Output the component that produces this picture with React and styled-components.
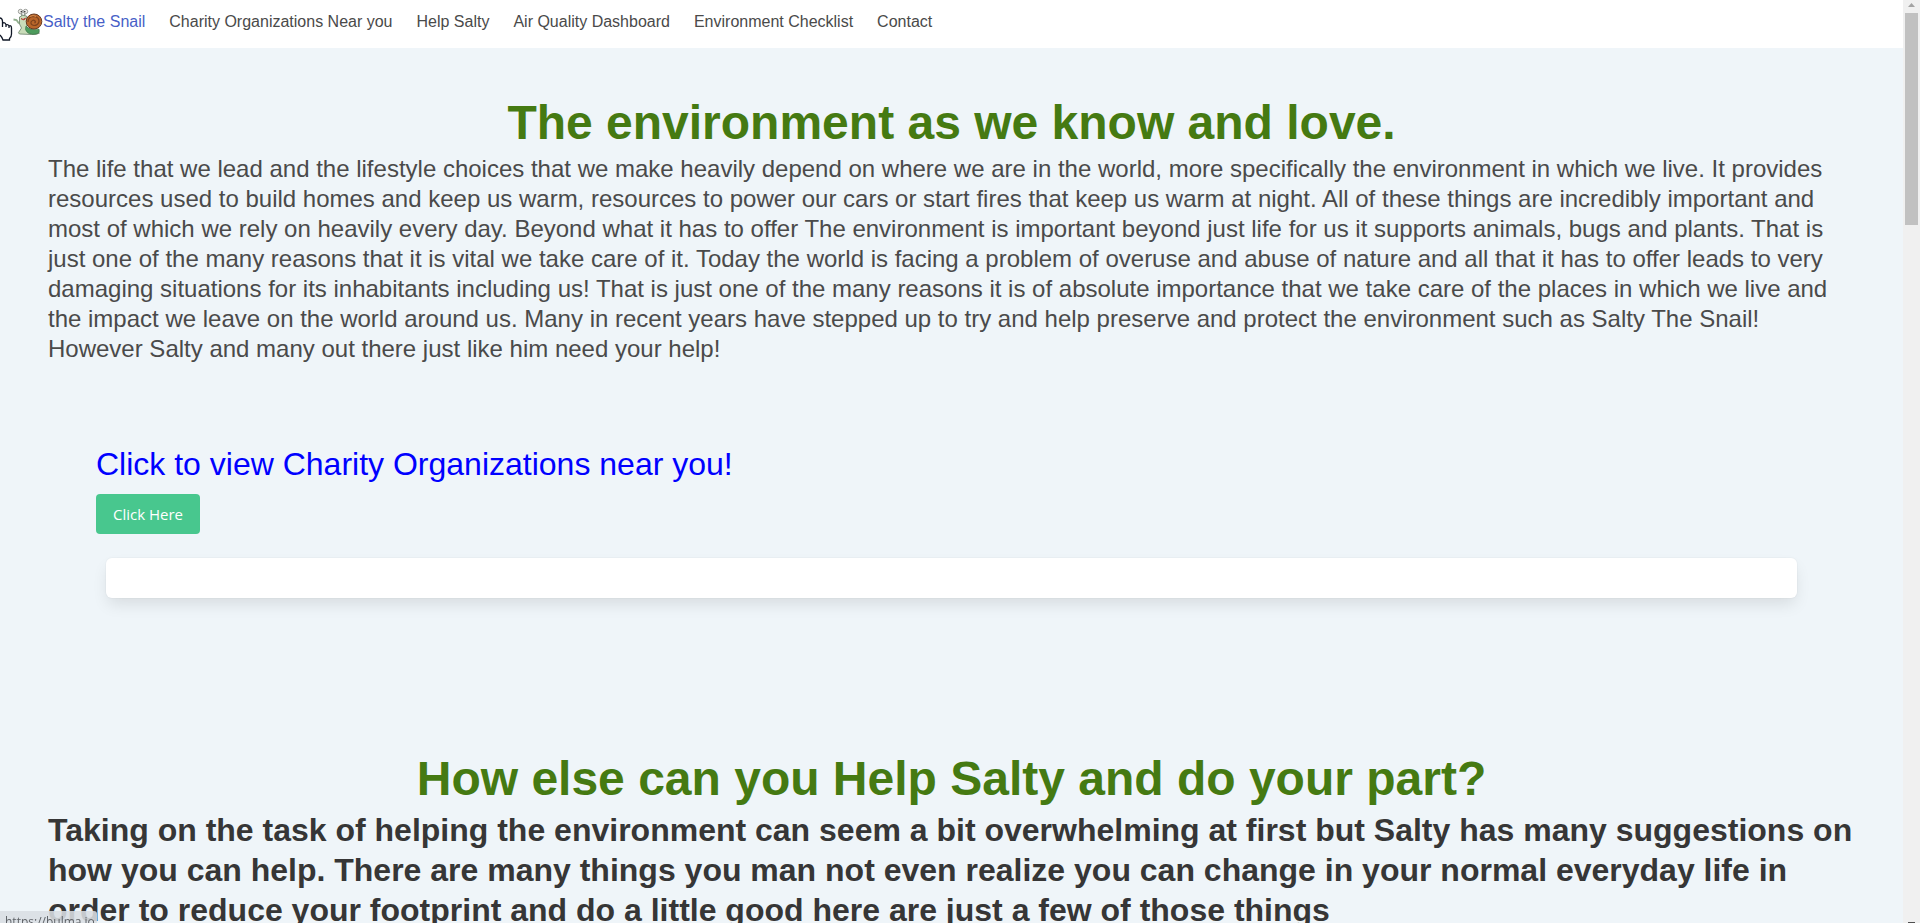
import React from "react";
import styled, { createGlobalStyle } from "styled-components";

const sans = `"Liberation Sans", Arial, Helvetica, sans-serif`;
const ui = `"Open Sans", "Noto Sans", sans-serif`;

const GlobalStyle = createGlobalStyle`
  *, *::before, *::after { box-sizing: border-box; }
  body { margin: 0; background: #eff5f9; color: #4a4a4a; font: 16px/24px ${sans}; }
  h1, h2, p { margin: 0; }
`;

const Shell = styled.div`
  display: grid;
  grid-template-columns: minmax(0, 1fr) 17px;
  height: 100vh;
  overflow: hidden;
`;

const Page = styled.div`
  height: 100vh;
  overflow: hidden;
`;

const Navbar = styled.nav`
  display: flex;
  height: 48px;
  padding: 10px 13px;
  gap: 24px;
  background: #fff;
`;

const NavLink = styled.a`
  display: flex;
  align-items: flex-start;
  color: ${(p) => (p.$active ? "#485fc7" : "#4a4a4a")};
  text-decoration: none;
  white-space: nowrap;
`;

const SnailIcon = styled.svg`
  width: 30px;
  height: 28px;
  overflow: visible;
`;

const Section = styled.section`
  padding: 48px;
`;

const Title = styled.h1`
  margin-bottom: 4px;
  color: #457a12;
  font-size: 48px;
  font-weight: 700;
  line-height: 54px;
  text-align: center;
`;

const Intro = styled.p`
  font-size: 24px;
  line-height: 30px;
`;

const Subtitle = styled.p`
  color: #363636;
  font-size: 32px;
  font-weight: 700;
  line-height: 40px;
`;

const Finder = styled.div`
  padding: 32px 96px 106px;
`;

const FinderText = styled.p`
  color: #00f;
  font-size: 32px;
  line-height: 40px;
`;

const Button = styled.button`
  display: block;
  height: 40px;
  margin-top: 10px;
  padding: 0 16px;
  border: 1px solid transparent;
  border-radius: 4px;
  background: #48c78e;
  color: #fff;
  font: 15px/24px ${ui};
`;

const Results = styled.div`
  height: 40px;
  margin: 24px 10px 0;
  border-radius: 6px;
  background: #fff;
  box-shadow: 0 8px 16px -2px rgba(10, 10, 10, 0.1), 0 0 0 1px rgba(10, 10, 10, 0.02);
`;

const ScrollTrack = styled.div`
  display: flex;
  flex-direction: column;
  align-items: center;
  justify-content: space-between;
  background: #f0f0f0;
`;

const Thumb = styled.div`
  width: 13px;
  height: 212px;
  margin-bottom: auto;
  background: #c1c1c1;
`;

const Arrow = styled.svg`
  width: 17px;
  height: ${(p) => p.$h}px;
`;

const StatusBar = styled.div`
  position: fixed;
  left: 0;
  bottom: 0;
  width: 97px;
  height: 12px;
  padding: 2px 5px;
  overflow: hidden;
  border-top-right-radius: 3px;
  background: rgba(218, 222, 226, 0.88);
  color: #5f6368;
  font: 12px/18px ${ui};
`;

const Cursor = styled.svg`
  position: fixed;
  left: 0;
  top: 14px;
  width: 13px;
  height: 28px;
`;

const links = [
  "Charity Organizations Near you",
  "Help Salty",
  "Air Quality Dashboard",
  "Environment Checklist",
  "Contact",
];

function Snail() {
  return (
    <SnailIcon viewBox="0 0 30 28" aria-hidden="true">
      <path d="M0.500 9.500l3 .5 2.500 3.500" stroke="#8fae8c" strokeWidth="1.800" fill="none" />
      <path d="M8 2l1 4M13 2l-2 4" stroke="#8c9a8c" strokeWidth="1.500" />
      <path d="M6.500 7q3-3 7-1l1 6-1 5 8 4 5 2q-3 2-8 1.500l-12-.5q-2-1 0-3l2-3-2-4z" fill="#c9dcb9" stroke="#6a806a" strokeWidth=".8" />
      <path d="M13 16q4 5 13 3 1 3-1 4.500-6 2-10-.5-4-3-2-7" fill="#4c9b5c" stroke="#42704c" strokeWidth=".6" />
      <ellipse cx="21" cy="11.500" rx="7.800" ry="7.500" fill="#b9662a" stroke="#68391f" />
      <path d="M15 12q0-5.500 6-5.500 5 .5 5 5-1 4-5 4-3.500-.5-3-3.500 2-3 4-1 1 1-.5 2" fill="none" stroke="#7d421e" strokeWidth="1.200" />
      <path d="M17 6.500q3-2 6 0" fill="none" stroke="#d48a4b" />
      <circle cx="7.500" cy="1.500" r="2.200" fill="#f2f2ec" stroke="#858985" strokeWidth=".8" />
      <circle cx="12.500" cy="1.500" r="2.200" fill="#f2f2ec" stroke="#858985" strokeWidth=".8" />
      <circle cx="8.300" cy="1.800" r=".8" fill="#222" />
      <circle cx="11.800" cy="1.800" r=".8" fill="#222" />
      <path d="M8 8.500q2 2 4.500-.5-1 3.500-4.500.5" fill="#b23b33" stroke="#b23b33" strokeWidth=".8" />
    </SnailIcon>
  );
}

export default function App() {
  return (
    <>
      <GlobalStyle />
      <Shell>
        <Page>
          <Navbar>
            <NavLink href="#home" $active><Snail />Salty the Snail</NavLink>
            {links.map((label) => (
              <NavLink key={label} href="#">{label}</NavLink>
            ))}
          </Navbar>
          <Section>
            <Title>The environment as we know and love.</Title>
            <Intro>
              The life that we lead and the lifestyle choices that we make heavily depend on where we are in the
              world, more specifically the environment in which we live. It provides resources used to build homes
              and keep us warm, resources to power our cars or start fires that keep us warm at night. All of these
              things are incredibly important and most of which we rely on heavily every day. Beyond what it has to
              offer The environment is important beyond just life for us it supports animals, bugs and plants. That
              is just one of the many reasons that it is vital we take care of it. Today the world is facing a
              problem of overuse and abuse of nature and all that it has to offer leads to very damaging situations
              for its inhabitants including us! That is just one of the many reasons it is of absolute importance
              that we take care of the places in which we live and the impact we leave on the world around us. Many
              in recent years have stepped up to try and help preserve and protect the environment such as Salty The
              Snail! However Salty and many out there just like him need your help!
            </Intro>
          </Section>
          <Finder>
            <FinderText>Click to view Charity Organizations near you!</FinderText>
            <Button type="button">Click Here</Button>
            <Results />
          </Finder>
          <Section>
            <Title as="h2">How else can you Help Salty and do your part?</Title>
            <Subtitle>
              Taking on the task of helping the environment can seem a bit overwhelming at first but Salty has many
              suggestions on how you can help. There are many things you man not even realize you can change in your
              normal everyday life in order to reduce your footprint and do a little good here are just a few of
              those things
            </Subtitle>
          </Section>
        </Page>
        <ScrollTrack aria-hidden="true">
          <Arrow $h={13} viewBox="0 0 17 13"><path d="M5 7h7L8.500 3z" fill="#a3a3a3" /></Arrow>
          <Thumb />
          <Arrow $h={1} viewBox="0 0 17 1"><path d="M5 0h7v1H5z" fill="#505050" /></Arrow>
        </ScrollTrack>
      </Shell>
      <StatusBar>https://bulma.io</StatusBar>
      <Cursor viewBox="0 0 13 28" aria-hidden="true">
        <path d="M0 4q2 0 2 3v6l1-5q3-1 3 2 3-1 3 2 3-1 3 2v6q0 6-4 6H3q-2-1-3-4V4" fill="#fff" />
        <path d="M0 4q2 0 2.500 3v6M2.500 13V9q3-1 3.500 2v2M6 11q2-1 3 1v2M9 12q2.500-1 2.500 2v6q0 3-2 4.500V26H3q-1-3-3-5" fill="none" stroke="#111827" strokeWidth="1.300" />
      </Cursor>
    </>
  );
}
